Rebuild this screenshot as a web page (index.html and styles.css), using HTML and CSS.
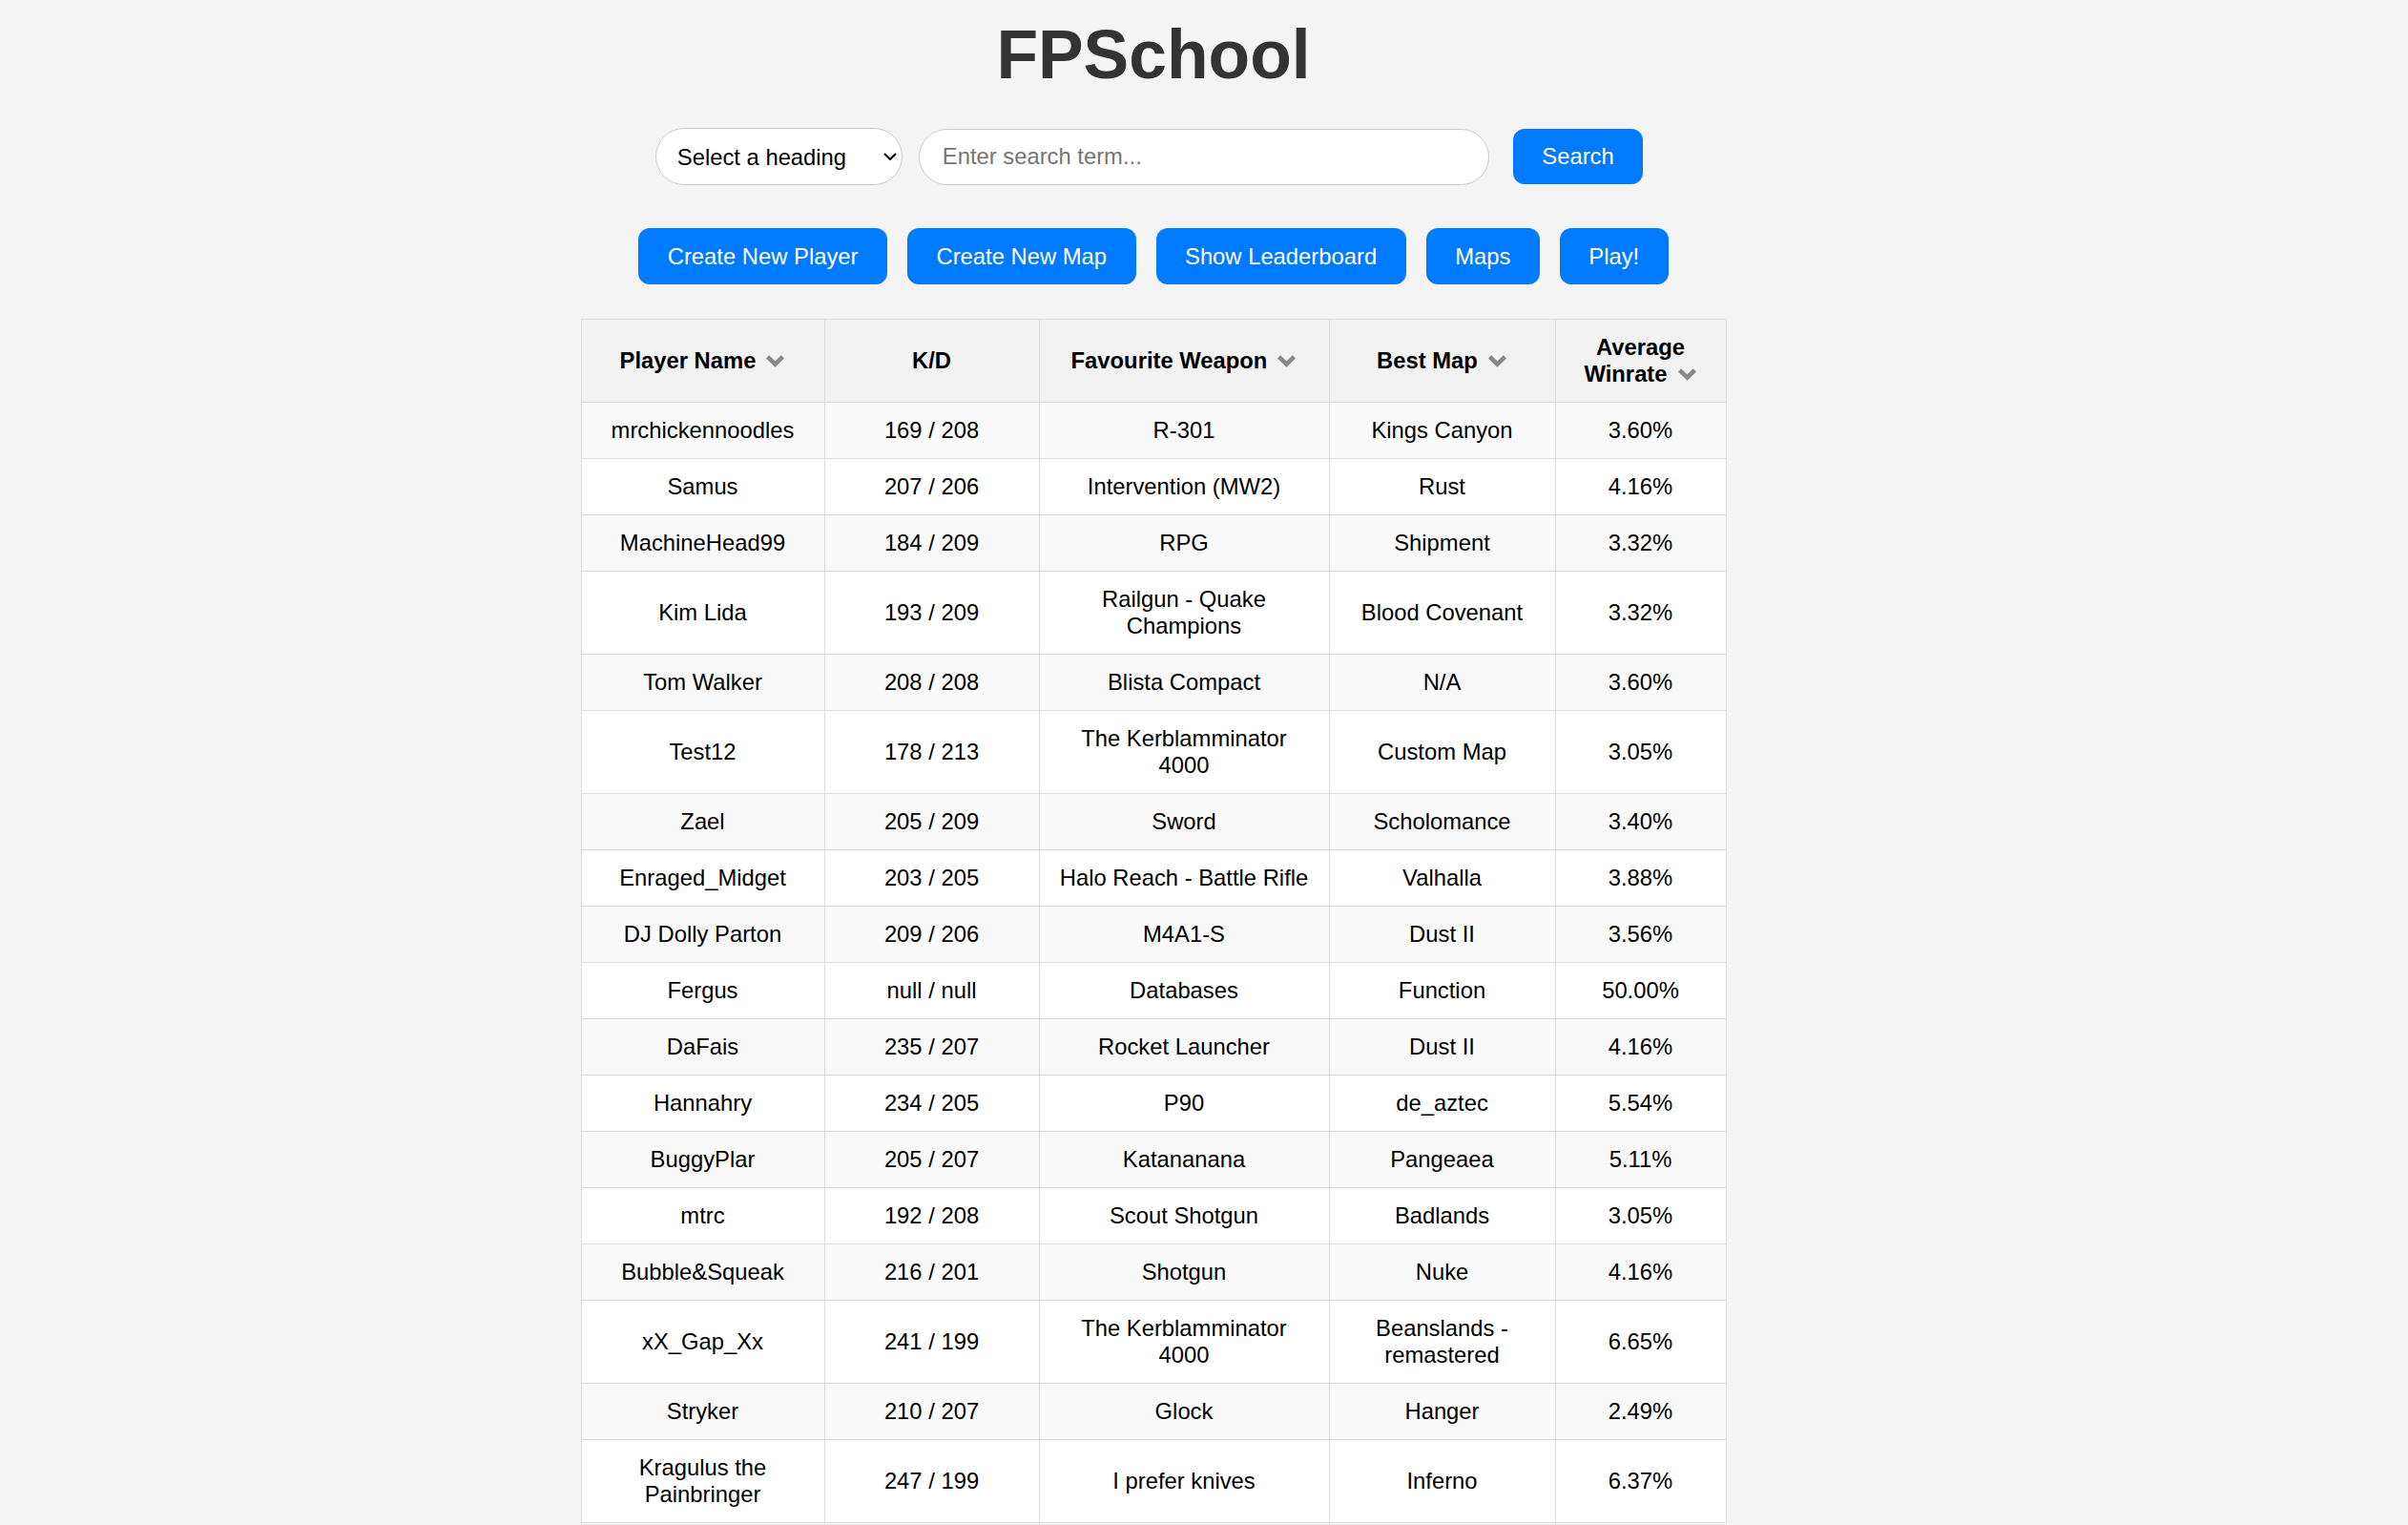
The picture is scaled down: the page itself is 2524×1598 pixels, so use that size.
FILE: index.html
```html
<!DOCTYPE html>
<html lang="en">
<head>
<meta charset="utf-8">
<title>FPSchool</title>
<link rel="stylesheet" href="styles.css">
</head>
<body>
<div class="page">
  <h1 class="title">FPSchool</h1>

  <div class="search-bar">
    <div class="select-wrap">
      <select class="heading-select">
        <option>Select a heading</option>
        <option>Player Name</option>
        <option>Favourite Weapon</option>
        <option>Best Map</option>
      </select>
      <svg class="select-arrow" width="14" height="8" viewBox="0 0 14 8"><path d="M1 1 L7 7 L13 1" fill="none" stroke="#000" stroke-width="2"/></svg>
    </div>
    <input class="search-input" type="text" placeholder="Enter search term...">
    <button class="btn btn-search">Search</button>
  </div>

  <div class="actions">
    <button class="btn">Create New Player</button>
    <button class="btn">Create New Map</button>
    <button class="btn">Show Leaderboard</button>
    <button class="btn">Maps</button>
    <button class="btn">Play!</button>
  </div>

  <table class="players">
    <colgroup>
      <col class="c-name"><col class="c-kd"><col class="c-weapon"><col class="c-map"><col class="c-win">
    </colgroup>
    <thead>
      <tr>
        <th>Player Name<svg class="sort" width="21" height="14" viewBox="0 0 21 14"><path d="M2.6 2.8 L10.5 10.6 L18.4 2.8" fill="none" stroke="#888" stroke-width="4.6"/></svg></th>
        <th>K/D</th>
        <th>Favourite Weapon<svg class="sort" width="21" height="14" viewBox="0 0 21 14"><path d="M2.6 2.8 L10.5 10.6 L18.4 2.8" fill="none" stroke="#888" stroke-width="4.6"/></svg></th>
        <th>Best Map<svg class="sort" width="21" height="14" viewBox="0 0 21 14"><path d="M2.6 2.8 L10.5 10.6 L18.4 2.8" fill="none" stroke="#888" stroke-width="4.6"/></svg></th>
        <th>Average Winrate<svg class="sort" width="21" height="14" viewBox="0 0 21 14"><path d="M2.6 2.8 L10.5 10.6 L18.4 2.8" fill="none" stroke="#888" stroke-width="4.6"/></svg></th>
      </tr>
    </thead>
    <tbody>
      <tr><td>mrchickennoodles</td><td>169 / 208</td><td>R-301</td><td>Kings Canyon</td><td>3.60%</td></tr>
      <tr><td>Samus</td><td>207 / 206</td><td>Intervention (MW2)</td><td>Rust</td><td>4.16%</td></tr>
      <tr><td>MachineHead99</td><td>184 / 209</td><td>RPG</td><td>Shipment</td><td>3.32%</td></tr>
      <tr><td>Kim Lida</td><td>193 / 209</td><td>Railgun - Quake Champions</td><td>Blood Covenant</td><td>3.32%</td></tr>
      <tr><td>Tom Walker</td><td>208 / 208</td><td>Blista Compact</td><td>N/A</td><td>3.60%</td></tr>
      <tr><td>Test12</td><td>178 / 213</td><td>The Kerblamminator 4000</td><td>Custom Map</td><td>3.05%</td></tr>
      <tr><td>Zael</td><td>205 / 209</td><td>Sword</td><td>Scholomance</td><td>3.40%</td></tr>
      <tr><td>Enraged_Midget</td><td>203 / 205</td><td>Halo Reach - Battle Rifle</td><td>Valhalla</td><td>3.88%</td></tr>
      <tr><td>DJ Dolly Parton</td><td>209 / 206</td><td>M4A1-S</td><td>Dust II</td><td>3.56%</td></tr>
      <tr><td>Fergus</td><td>null / null</td><td>Databases</td><td>Function</td><td>50.00%</td></tr>
      <tr><td>DaFais</td><td>235 / 207</td><td>Rocket Launcher</td><td>Dust II</td><td>4.16%</td></tr>
      <tr><td>Hannahry</td><td>234 / 205</td><td>P90</td><td>de_aztec</td><td>5.54%</td></tr>
      <tr><td>BuggyPlar</td><td>205 / 207</td><td>Katananana</td><td>Pangeaea</td><td>5.11%</td></tr>
      <tr><td>mtrc</td><td>192 / 208</td><td>Scout Shotgun</td><td>Badlands</td><td>3.05%</td></tr>
      <tr><td>Bubble&amp;Squeak</td><td>216 / 201</td><td>Shotgun</td><td>Nuke</td><td>4.16%</td></tr>
      <tr><td>xX_Gap_Xx</td><td>241 / 199</td><td>The Kerblamminator 4000</td><td>Beanslands - remastered</td><td>6.65%</td></tr>
      <tr><td>Stryker</td><td>210 / 207</td><td>Glock</td><td>Hanger</td><td>2.49%</td></tr>
      <tr><td>Kragulus the Painbringer</td><td>247 / 199</td><td>I prefer knives</td><td>Inferno</td><td>6.37%</td></tr>
    </tbody>
  </table>
</div>
</body>
</html>
```

FILE: styles.css
```css
html, body {
  margin: 0;
  padding: 0;
}

body {
  background: #f4f4f4;
  font-family: "Liberation Sans", Arial, sans-serif;
  font-size: 23.8px;
  color: #000;
}

.page {
  padding-right: 106px;
  display: flex;
  flex-direction: column;
  align-items: center;
}

.title {
  margin: 17px 0 0;
  font-size: 71.4px;
  line-height: 80px;
  font-weight: bold;
  color: #333;
  text-align: center;
}

.search-bar {
  margin-top: 37px;
  display: flex;
  align-items: center;
  padding-right: 9px;
}

.select-wrap {
  position: relative;
  display: flex;
}

.heading-select {
  appearance: none;
  -webkit-appearance: none;
  width: 259px;
  height: 60px;
  border: 1px solid #ccc;
  border-radius: 30px;
  background: #fff;
  padding: 0 0 0 22px;
  font-family: "Liberation Sans", Arial, sans-serif;
  font-size: 23.8px;
  color: #000;
  outline: none;
}

.select-arrow {
  position: absolute;
  right: 6px;
  top: 26px;
  pointer-events: none;
}

.search-input {
  margin-left: 17px;
  width: 598px;
  height: 59px;
  box-sizing: border-box;
  border: 1px solid #ccc;
  border-radius: 30px;
  background: #fff;
  padding: 0 24px;
  font-family: "Liberation Sans", Arial, sans-serif;
  font-size: 23.8px;
  color: #000;
  outline: none;
}

.search-input::placeholder {
  color: #757575;
}

.btn {
  border: none;
  border-radius: 12px;
  background: #007bff;
  color: #fff;
  font-family: "Liberation Sans", Arial, sans-serif;
  font-size: 23.8px;
  line-height: normal;
  padding: 15px 30.5px;
  cursor: pointer;
}

.btn-search {
  margin-left: 25px;
  padding: 15px 30.5px;
}

.actions {
  margin-top: 45px;
  display: flex;
  gap: 21px;
}

.actions .btn {
  padding: 15.5px 30.5px;
}

.players {
  margin-top: 36px;
  width: 1200px;
  table-layout: fixed;
  border-collapse: collapse;
  background: #fff;
}

.c-name { width: 255px; }
.c-kd { width: 225px; }
.c-weapon { width: 304px; }
.c-map { width: 237px; }
.c-win { width: 179px; }

.players th,
.players td {
  border: 1px solid #ddd;
  padding: 15px;
  text-align: center;
  vertical-align: middle;
  line-height: 28px;
}

.players th {
  background: #f2f2f2;
  font-weight: bold;
}

.players tbody tr:nth-child(odd) {
  background: #f9f9f9;
}

.players tbody tr:nth-child(even) {
  background: #fff;
}

.sort {
  margin-left: 10px;
  vertical-align: 1px;
}
```
